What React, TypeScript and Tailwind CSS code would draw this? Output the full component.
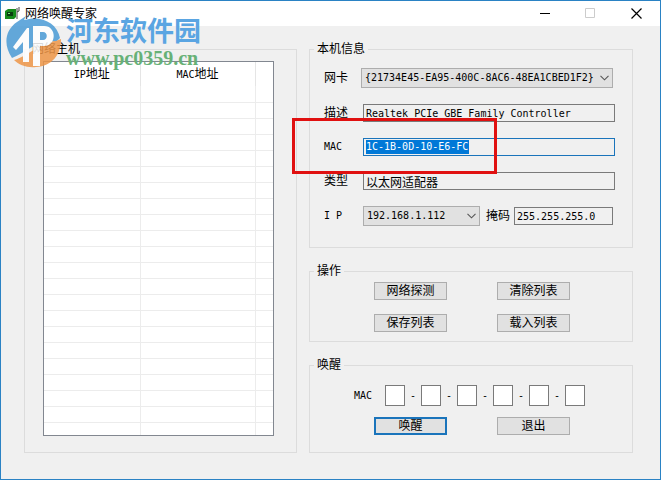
import React, { useId } from "react";

const mono =
  "font-['DejaVu_Sans_Mono','Noto_Sans_CJK_SC',monospace] text-[10px] leading-4";
const cjk = "font-['Liberation_Sans','Noto_Sans_CJK_SC',sans-serif] text-[12px] leading-4";

function Group({
  title,
  className = "",
  bodyClass,
  children,
}: {
  title: string;
  className?: string;
  bodyClass: string;
  children: React.ReactNode;
}) {
  return (
    <fieldset className={`min-w-0 border border-[#dcdcdc] ${className}`}>
      <legend className={`ml-1 px-[3px] ${cjk}`}>{title}</legend>
      <div className={bodyClass}>{children}</div>
    </fieldset>
  );
}

function Button({ children, primary = false }: { children: string; primary?: boolean }) {
  return (
    <button
      type="button"
      className={`flex h-[18px] w-[73px] items-center justify-center bg-[#e1e1e1] ${cjk} ${
        primary ? "border-2 border-[#1a74bb]" : "border border-[#adadad]"
      }`}
    >
      {children}
    </button>
  );
}

function Dropdown({ id, value, className }: { id: string; value: string; className: string }) {
  return (
    <div className={`relative ${className}`}>
      <select
        id={id}
        className={`block h-5 w-full appearance-none border border-[#adadad] bg-[#e1e1e1] pl-[3px] ${mono}`}
      >
        <option>{value}</option>
      </select>
      <svg
        className="pointer-events-none absolute top-[7px] right-1 h-[6px] w-[9px]"
        viewBox="0 0 9 6"
        fill="none"
        stroke="#555"
        strokeWidth="1.1"
      >
        <path d="M0.5 0.8 4.5 4.8 8.5 0.8" />
      </svg>
    </div>
  );
}

function Field({
  label,
  latin = false,
  children,
}: {
  label: string;
  latin?: boolean;
  children: (id: string) => React.ReactNode;
}) {
  const id = useId();
  return (
    <div className="flex items-center">
      <label htmlFor={id} className={`w-[39px] shrink-0 whitespace-pre ${latin ? mono : cjk}`}>
        {label}
      </label>
      {children(id)}
    </div>
  );
}

const box = "block h-[18px] min-w-0 border bg-[#f0f0f0] px-[2px] outline-none";

function HostList() {
  return (
    <div className="flex h-[375px] flex-col border border-[#828790] bg-white">
      <table className="h-full w-full table-fixed border-collapse">
        <colgroup>
          <col className="w-[96px]" />
          <col className="w-[115px]" />
          <col />
        </colgroup>
        <thead>
          <tr className="h-6">
            <th className={`border-r border-[#e5e5e5] p-0 font-normal ${mono}`}>
              IP<span className="text-[12px]">地址</span>
            </th>
            <th className={`border-r border-[#e5e5e5] p-0 font-normal ${mono}`}>
              MAC<span className="text-[12px]">地址</span>
            </th>
            <th className="p-0" />
          </tr>
        </thead>
        <tbody>
          {Array.from({ length: 21 }, (_, i) => (
            <tr key={i} className="h-4 border-b border-[#ececec]">
              <td className="border-r border-[#ececec] p-0" />
              <td className="border-r border-[#ececec] p-0" />
              <td className="p-0" />
            </tr>
          ))}
          <tr>
            <td className="border-r border-[#ececec] p-0" />
            <td className="border-r border-[#ececec] p-0" />
            <td className="p-0" />
          </tr>
        </tbody>
      </table>
    </div>
  );
}

function Watermark() {
  return (
    <div className="pointer-events-none absolute top-[15px] left-1 flex items-start gap-[3px]">
      <svg className="h-[52px] w-[58px] opacity-85" viewBox="0 0 58 52">
        <path d="M7 42C-2 29 0 14 12 6L21 0l-2 4c16-5 33 2 36 18l-4 4C34 22 22 36 7 42Z" fill="#4a9bd6" />
        <path d="M9 44c15-4 26-18 42-19l5-2c0 16-9 27-25 28-9 1-17-2-22-7Z" fill="#ee9647" />
        <path d="M8 31 22 12h2v34h-6V26l-7 8ZM28 10h11c13 0 13 20 0 20h-4v20h-7Zm7 6v8h3c5 0 5-8 0-8Z" fill="#fff" />
      </svg>
      <div>
        <div className="font-['Noto_Sans_CJK_SC',sans-serif] text-[27px] leading-7 font-bold whitespace-nowrap text-[#5aa5e2]">
          河东软件园
        </div>
        <div className="mt-1 font-['Liberation_Serif',serif] text-[20px] leading-5 font-bold text-[#67b177]">
          www.pc0359.cn
        </div>
      </div>
    </div>
  );
}

export default function App() {
  return (
    <div className="relative flex min-h-screen flex-col border border-[#2a82c4] bg-[#f0f0f0] text-black">
      <header className="flex h-[25px] items-center bg-white pl-1">
        <svg className="h-4 w-4" viewBox="0 0 16 16">
          <path d="M0 5 3 3h8v8l-2 2H0Z" fill="#168a1c" />
          <path d="M2 6h6v4H2Z" fill="#0a3d10" />
          <path d="M3 7h2v1H3Z" fill="#7be07c" />
          <path d="M12 2v11M14 1v4l-2 1" stroke="#444" fill="none" />
        </svg>
        <h1 className={`ml-1 flex-1 ${cjk}`}>网络唤醒专家</h1>
        <button type="button" aria-label="最小化" className="flex w-[45px] justify-center">
          <svg className="h-[11px] w-[11px]" viewBox="0 0 11 11" stroke="#000">
            <path d="M0 5.5h10" />
          </svg>
        </button>
        <button type="button" aria-label="最大化" disabled className="flex w-[45px] justify-center">
          <svg className="h-[11px] w-[11px]" viewBox="0 0 11 11" stroke="#ccc" fill="none">
            <path d="M.5.5h9v9h-9Z" />
          </svg>
        </button>
        <button type="button" aria-label="关闭" className="flex w-[47px] justify-center">
          <svg className="h-[11px] w-[11px]" viewBox="0 0 11 11" stroke="#000" strokeWidth="1.2">
            <path d="m.5.5 10 10m0-10-10 10" />
          </svg>
        </button>
      </header>

      <main className="flex gap-3 pt-[15px] pr-[27px] pb-5 pl-[23px]">
        <Group title="网络主机" className="w-[273px] shrink-0" bodyClass="pt-1 pr-[22px] pb-4 pl-[18px]">
          <HostList />
        </Group>

        <div className="flex min-w-0 flex-1 flex-col gap-[15px]">
          <Group title="本机信息" bodyClass="pr-[17px] pb-[21px] pl-[14px]">
            <div className="flex flex-col gap-4 pt-[11px]">
              <Field label="网卡">
                {(id) => (
                  <Dropdown
                    id={id}
                    value="{21734E45-EA95-400C-8AC6-48EA1CBED1F2}"
                    className="-ml-[2px] mr-[2px] flex-1"
                  />
                )}
              </Field>
              <Field label="描述">
                {(id) => (
                  <input
                    id={id}
                    readOnly
                    defaultValue="Realtek PCIe GBE Family Controller"
                    className={`flex-1 border-[#7a7a7a] ${box} ${mono}`}
                  />
                )}
              </Field>
              <Field label="MAC" latin>
                {(id) => (
                  <div className={`flex flex-1 items-center border-[#1a74bb] ${box}`}>
                    <input
                      id={id}
                      readOnly
                      defaultValue="1C-1B-0D-10-E6-FC"
                      className={`h-[14px] w-[103px] bg-[#0078d7] text-white outline-none ${mono}`}
                    />
                  </div>
                )}
              </Field>
              <Field label="类型">
                {(id) => (
                  <input
                    id={id}
                    readOnly
                    defaultValue="以太网适配器"
                    className={`flex-1 border-[#7a7a7a] ${box} ${cjk}`}
                  />
                )}
              </Field>
              <div className="flex items-center">
                <Field label="I P" latin>
                  {(id) => <Dropdown id={id} value="192.168.1.112" className="w-[117px]" />}
                </Field>
                <label htmlFor="mask" className={`mr-1 ml-[6px] shrink-0 ${cjk}`}>
                  掩码
                </label>
                <input
                  id="mask"
                  readOnly
                  defaultValue="255.255.255.0"
                  className={`mr-[2px] flex-1 border-[#7a7a7a] ${box} ${mono}`}
                />
              </div>
            </div>
          </Group>

          <Group title="操作" bodyClass="pb-[9px] pl-16">
            <div className="grid w-[196px] grid-cols-2 gap-x-[50px] gap-y-[14px] pt-[3px]">
              <Button>网络探测</Button>
              <Button>清除列表</Button>
              <Button>保存列表</Button>
              <Button>载入列表</Button>
            </div>
          </Group>

          <Group title="唤醒" bodyClass="pb-[17px] pl-11">
            <div role="group" aria-label="MAC" className="flex items-center pt-3">
              <span className={`w-[31px] ${mono}`}>MAC</span>
              {Array.from({ length: 6 }, (_, i) => (
                <React.Fragment key={i}>
                  {i > 0 && <span className={`w-4 text-center ${mono}`}>-</span>}
                  <input
                    aria-label={`MAC ${i + 1}`}
                    className={`block h-[21px] w-5 border border-[#7a7a7a] bg-white text-center outline-none ${mono}`}
                  />
                </React.Fragment>
              ))}
            </div>
            <div className="flex gap-[50px] pt-[11px] pl-5">
              <Button primary>唤醒</Button>
              <Button>退出</Button>
            </div>
          </Group>
        </div>
      </main>

      <div className="pointer-events-none absolute top-[117px] left-[291px] h-14 w-[205px] border-[3px] border-[#e01010]" />
      <Watermark />
    </div>
  );
}
